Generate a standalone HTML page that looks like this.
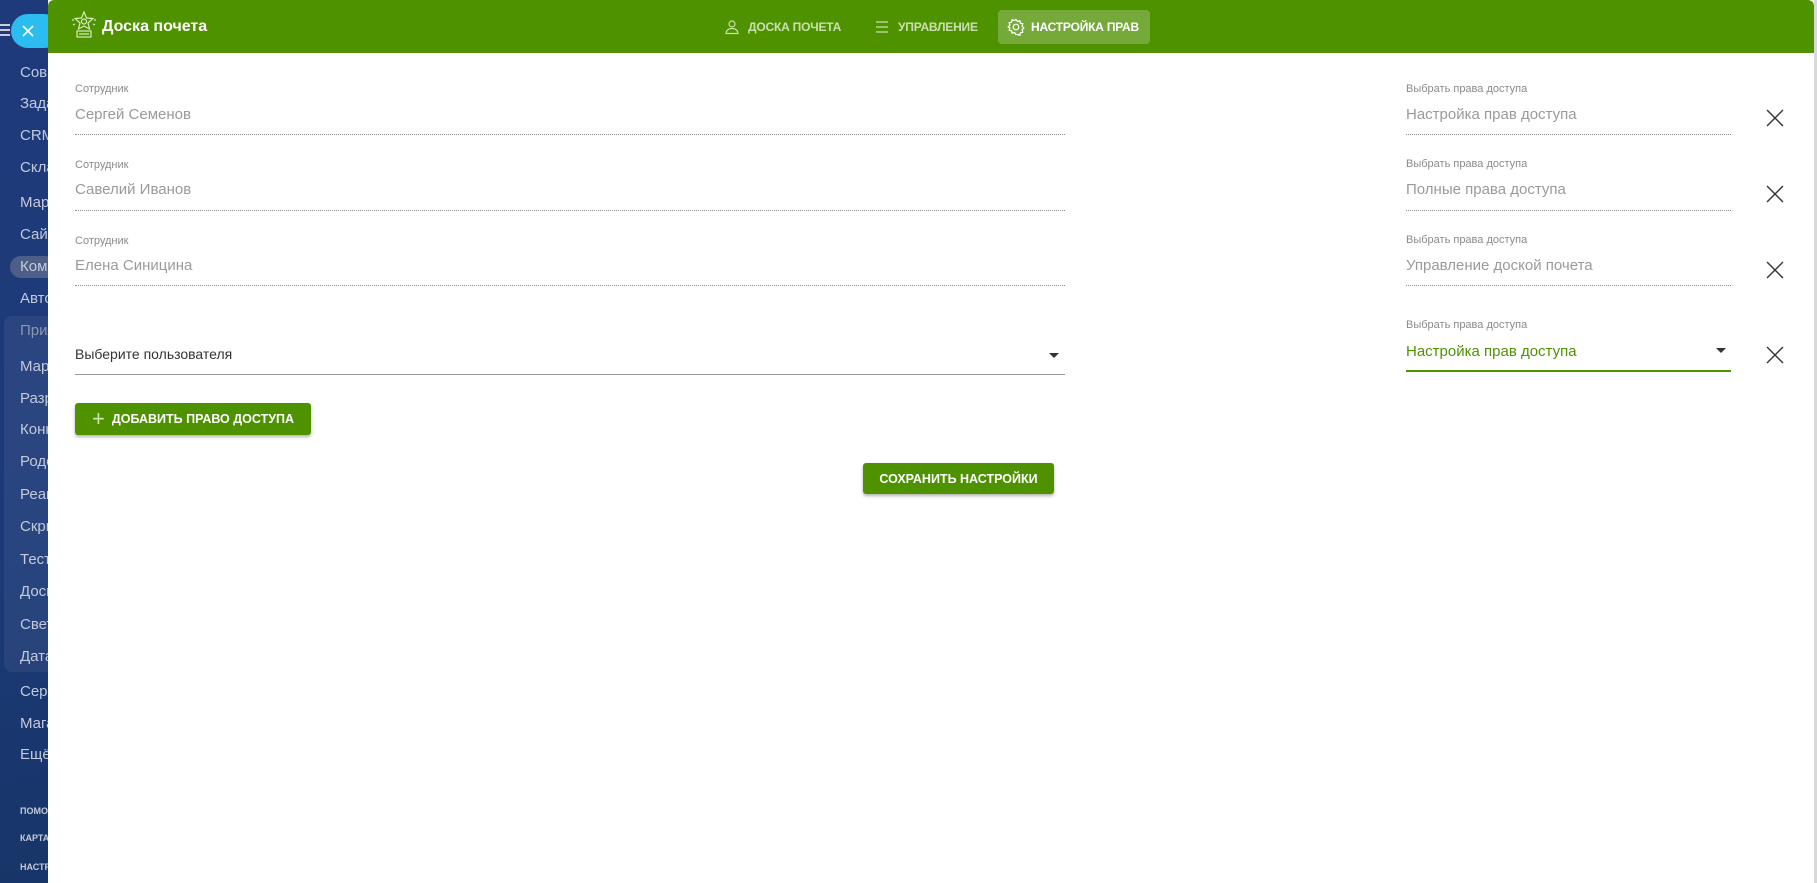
<!DOCTYPE html>
<html><head><meta charset="utf-8"><style>
*{margin:0;padding:0;box-sizing:border-box}
body{width:1817px;height:883px;overflow:hidden;position:relative;font-family:"Liberation Sans","Noto Sans CJK SC",sans-serif;background:#fff}
#side{position:absolute;left:0;top:0;width:60px;height:883px;background:linear-gradient(160deg,#1f3a7a 0%,#1c3a78 60%,#173567 100%);overflow:hidden}
.si{position:absolute;left:20px;font-size:15px;color:#c3cadb;white-space:nowrap;line-height:18px}
.sm{position:absolute;left:20px;font-size:9px;font-weight:bold;color:#c3cadb;white-space:nowrap}
#panel{position:absolute;left:48px;top:0;width:1766px;height:883px;background:#fff}
#hdr{position:absolute;left:48px;top:0;width:1766px;height:53px;background:#4f9200;border-radius:6px 6px 0 0}
.lab{position:absolute;font-size:11px;color:#8a8a8a;white-space:nowrap}
.val{position:absolute;font-size:15px;color:#9a9a9a;white-space:nowrap}
.dl{position:absolute;height:0;border-top:1px dotted #8c8c8c}
.x{position:absolute;width:18px;height:18px}
.btn{position:absolute;background:#4f9200;color:#fff;font-weight:bold;font-size:12.5px;border-radius:3px;box-shadow:0 2px 3px rgba(0,0,0,.3);display:flex;align-items:center;justify-content:center;white-space:nowrap}
.nav{position:absolute;top:10px;height:34px;display:flex;align-items:center;font-size:12px;font-weight:bold;color:#c9e0ae;white-space:nowrap;letter-spacing:-0.2px}
</style></head><body>
<div id="side">
<div style="position:absolute;left:0;top:24px;width:10px;height:2px;background:#ccd;box-shadow:0 5px 0 #ccd,0 10px 0 #ccd"></div>
<div class="si" style="top:64px">Совм</div>
<div class="si" style="top:95px">Зада</div>
<div class="si" style="top:127px">CRM</div>
<div class="si" style="top:159px">Скла</div>
<div class="si" style="top:194px">Мар</div>
<div class="si" style="top:226px">Сайт</div>
<div style="position:absolute;left:10px;top:256px;width:60px;height:22px;border-radius:11px;background:#4d5f86"></div>
<div class="si" style="top:258px">Комп</div>
<div class="si" style="top:290px">Авто</div>
<div style="position:absolute;left:4px;top:316px;width:60px;height:356px;border-radius:8px;background:rgba(255,255,255,.06)"></div>
<div class="si" style="top:322px;color:#8c96b0">Прил</div>
<div class="si" style="top:358px">Мар</div>
<div class="si" style="top:390px">Разр</div>
<div class="si" style="top:421px">Конн</div>
<div class="si" style="top:453px">Родо</div>
<div class="si" style="top:486px">Реак</div>
<div class="si" style="top:518px">Скри</div>
<div class="si" style="top:551px">Тест</div>
<div class="si" style="top:583px">Доск</div>
<div class="si" style="top:616px">Свет</div>
<div class="si" style="top:648px">Дата</div>
<div class="si" style="top:683px">Серв</div>
<div class="si" style="top:715px">Мага</div>
<div class="si" style="top:746px">Ещё</div>
<div class="sm" style="top:806px">ПОМО</div>
<div class="sm" style="top:833px">КАРТА</div>
<div class="sm" style="top:862px">НАСТР</div>
</div>
<div style="position:absolute;left:11px;top:14px;width:50px;height:34px;border-radius:17px;background:#2bbdf0"></div>
<svg style="position:absolute;left:22px;top:25px" width="12" height="12"><path d="M1 1L11 11M11 1L1 11" stroke="#fff" stroke-width="1.6"/></svg>
<div id="panel"></div>
<div id="hdr"></div>
<svg style="position:absolute;left:71px;top:10px" width="26" height="30" viewBox="0 0 26 30" fill="none" stroke="#d6ebbd" stroke-width="1.2"><path d="M13 2L15.5 8L22 8.5L17 13L18.5 19L13 16L7.5 19L9 13L4 8.5L10.5 8Z"/><circle cx="13" cy="11.5" r="2.5"/><rect x="6" y="21" width="14" height="6"/><path d="M8 24h10M1 10h2M23 10h2M2 15l2-1M24 15l-2-1"/></svg>
<div style="position:absolute;left:102px;top:18px;font-size:16px;font-weight:bold;color:#fff">Доска почета</div>
<div class="nav" style="left:724px"><svg width="16" height="16" viewBox="0 0 16 16" fill="none" stroke="#c9e0ae" stroke-width="1.2"><circle cx="8" cy="5" r="3"/><path d="M2 14.5h12c0-3-2.5-5-6-5s-6 2-6 5z"/></svg><span style="margin-left:8px">ДОСКА ПОЧЕТА</span></div>
<div class="nav" style="left:874px"><svg width="16" height="16" viewBox="0 0 16 16" stroke="#c9e0ae" stroke-width="1.2"><path d="M2 3h12M2 8h12M2 13h12"/></svg><span style="margin-left:8px">УПРАВЛЕНИЕ</span></div>
<div class="nav" style="left:998px;width:152px;background:#75aa3a;border-radius:4px;color:#fff;padding-left:9px"><svg width="18" height="18" viewBox="0 0 18 18" fill="none" stroke="#fff" stroke-width="1.2"><path d="M9 1.5l1.5 2 2.4-.7.5 2.4 2.4.6-.7 2.4 1.7 1.8-1.7 1.8.7 2.4-2.4.6-.5 2.4-2.4-.7L9 16.5l-1.5-2-2.4.7-.5-2.4-2.4-.6.7-2.4L1.2 9l1.7-1.8-.7-2.4 2.4-.6.5-2.4 2.4.7z"/><circle cx="9" cy="9" r="2.8"/></svg><span style="margin-left:6px">НАСТРОЙКА ПРАВ</span></div>

<div class="lab" style="left:75px;top:83px">Сотрудник</div>
<div class="val" style="left:75px;top:106px">Сергей Семенов</div>
<div class="dl" style="left:75px;top:134px;width:990px"></div>
<div class="lab" style="left:75px;top:159px">Сотрудник</div>
<div class="val" style="left:75px;top:181px">Савелий Иванов</div>
<div class="dl" style="left:75px;top:210px;width:990px"></div>
<div class="lab" style="left:75px;top:235px">Сотрудник</div>
<div class="val" style="left:75px;top:257px">Елена Синицина</div>
<div class="dl" style="left:75px;top:285px;width:990px"></div>
<div class="val" style="left:75px;top:346px;color:#333;font-size:14px">Выберите пользователя</div>
<div style="position:absolute;left:1049px;top:353px;border-left:5px solid transparent;border-right:5px solid transparent;border-top:5px solid #333"></div>
<div style="position:absolute;left:75px;top:374px;width:990px;height:1px;background:#999"></div>
<div class="btn" style="left:75px;top:403px;width:236px;height:32px"><span style="font-weight:normal;font-size:22px;color:#cfe6b4;margin-right:7px;line-height:20px">+</span>ДОБАВИТЬ ПРАВО ДОСТУПА</div>
<div class="btn" style="left:863px;top:463px;width:191px;height:31px">СОХРАНИТЬ НАСТРОЙКИ</div>

<div class="lab" style="left:1406px;top:83px">Выбрать права доступа</div>
<div class="val" style="left:1406px;top:106px">Настройка прав доступа</div>
<div class="dl" style="left:1406px;top:134px;width:325px"></div>
<div class="lab" style="left:1406px;top:158px">Выбрать права доступа</div>
<div class="val" style="left:1406px;top:181px">Полные права доступа</div>
<div class="dl" style="left:1406px;top:210px;width:325px"></div>
<div class="lab" style="left:1406px;top:234px">Выбрать права доступа</div>
<div class="val" style="left:1406px;top:257px">Управление доской почета</div>
<div class="dl" style="left:1406px;top:285px;width:325px"></div>
<div class="lab" style="left:1406px;top:319px">Выбрать права доступа</div>
<div class="val" style="left:1406px;top:343px;color:#4f9200">Настройка прав доступа</div>
<div style="position:absolute;left:1716px;top:348px;border-left:5px solid transparent;border-right:5px solid transparent;border-top:5px solid #333"></div>
<div style="position:absolute;left:1406px;top:370px;width:325px;height:2px;background:#4f9200"></div>
<svg class="x" style="left:1766px;top:109px"><path d="M1 1L17 17M17 1L1 17" stroke="#333" stroke-width="1.4"/></svg>
<svg class="x" style="left:1766px;top:185px"><path d="M1 1L17 17M17 1L1 17" stroke="#333" stroke-width="1.4"/></svg>
<svg class="x" style="left:1766px;top:261px"><path d="M1 1L17 17M17 1L1 17" stroke="#333" stroke-width="1.4"/></svg>
<svg class="x" style="left:1766px;top:346px"><path d="M1 1L17 17M17 1L1 17" stroke="#333" stroke-width="1.4"/></svg>
<div style="position:absolute;left:1814px;top:0;width:3px;height:883px;background:#d8d8d8"></div>
</body></html>
